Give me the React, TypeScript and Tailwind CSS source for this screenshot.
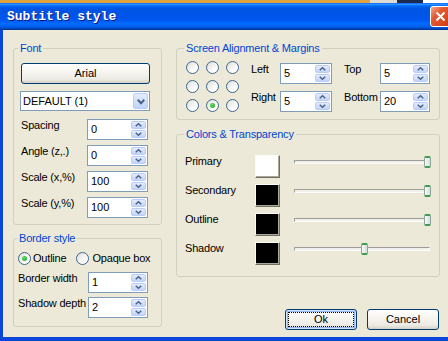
import React from "react";

const LABEL = "text-[11px] leading-[13px] tracking-[-0.2px] text-black whitespace-nowrap";
const LEGEND = "px-[2px] text-[11px] leading-[13px] tracking-[-0.2px] text-[#0046d5] whitespace-nowrap";
const GROUP = "rounded-[3px] border border-[#d0d0bf]";
const SPINBTN =
  "flex flex-1 items-center justify-center rounded-[2px] border border-[#b9cdf6] bg-[linear-gradient(to_bottom,#e3ecfd,#c2d4f9)]";
const XPBTN =
  "flex items-center justify-center rounded-[3px] border border-[#003c74] bg-[linear-gradient(to_bottom,#ffffff_0%,#f6f5f0_40%,#ecebe4_80%,#d6d0c5_100%)] text-[11px] text-black";

function Chevron({ down, w = 7, h = 4, sw = 1.5 }: { down?: boolean; w?: number; h?: number; sw?: number }) {
  const pts = down
    ? `0.75,0.75 ${w / 2},${h - 0.75} ${w - 0.75},0.75`
    : `0.75,${h - 0.75} ${w / 2},0.75 ${w - 0.75},${h - 0.75}`;
  return (
    <svg width={w} height={h} viewBox={`0 0 ${w} ${h}`} style={{ overflow: "visible" }}>
      <polyline points={pts} fill="none" stroke="#4d6185" strokeWidth={sw} />
    </svg>
  );
}

function SpinBox({ value, width }: { value: string; width: string }) {
  return (
    <div className={`flex h-[21px] shrink-0 border border-[#7f9db9] bg-white ${width}`}>
      <div className="flex flex-1 items-center pl-[3px] text-[11px] text-black">{value}</div>
      <div className="flex w-[17px] flex-col gap-[1px] p-[1px]">
        <div className={SPINBTN}>
          <Chevron />
        </div>
        <div className={SPINBTN}>
          <Chevron down />
        </div>
      </div>
    </div>
  );
}

function Radio({ checked }: { checked?: boolean }) {
  return (
    <span className="flex h-[13px] w-[13px] shrink-0 items-center justify-center rounded-full border border-[#3d6690] bg-[linear-gradient(135deg,#dcdcd7,#ffffff_70%)]">
      {checked && (
        <span className="h-[5px] w-[5px] rounded-full bg-[radial-gradient(circle_at_35%_35%,#63dd63,#21a121)]" />
      )}
    </span>
  );
}

function Swatch({ fill }: { fill: string }) {
  return (
    <div className="flex h-[23px] w-[25px] shrink-0 border border-b-[#716f64] border-l-[#fbfbf8] border-r-[#716f64] border-t-[#fbfbf8] bg-[#ece9d8]">
      <div className={`flex-1 border-b border-r border-[#aca899] ${fill}`} />
    </div>
  );
}

function Slider({ pos }: { pos: number }) {
  return (
    <div className="relative ml-[14px] flex h-[13px] w-[137px] items-center">
      <div className="h-[4px] w-[136px] rounded-[1px] border border-b-white border-l-[#9d9c99] border-r-white border-t-[#9d9c99] bg-[#f1f0ea]" />
      <div
        className="absolute top-[1px] h-[12px] w-[7px] rounded-[2px] border-x border-y-2 border-x-[#8ea399] border-y-[#3c9d50] bg-[linear-gradient(to_right,#f6f9f7,#d3e1da)]"
        style={{ left: pos }}
      />
    </div>
  );
}

function CloseButton() {
  return (
    <div className="flex h-[21px] w-[21px] shrink-0 items-center justify-center rounded-[3px] border border-white bg-[linear-gradient(135deg,#f2a68d_0%,#e25b33_35%,#d84a22_70%,#c23a14_100%)]">
      <svg width="11" height="11" viewBox="0 0 11 11">
        <path d="M1.5 1.5 L9.5 9.5 M9.5 1.5 L1.5 9.5" stroke="white" strokeWidth="2" />
      </svg>
    </div>
  );
}

export default function App() {
  const fontRows = [
    { label: "Spacing", value: "0" },
    { label: "Angle (z,.)", value: "0" },
    { label: "Scale (x,%)", value: "100" },
    { label: "Scale (y,%)", value: "100" },
  ];
  const colors = [
    { name: "Primary", fill: "bg-white", pos: 130 },
    { name: "Secondary", fill: "bg-black", pos: 130 },
    { name: "Outline", fill: "bg-black", pos: 130 },
    { name: "Shadow", fill: "bg-black", pos: 67 },
  ];

  return (
    <div className="relative flex h-[341px] w-[448px] flex-col overflow-hidden bg-[#ece9d8] font-['Liberation_Sans',Arial,sans-serif]">
      {/* desktop strip behind the window */}
      <div className="flex h-[3px] shrink-0">
        <div className="w-[370px] bg-[#e2a33f]" />
        <div className="w-[27px] bg-[#dcdad2]" />
        <div className="w-[26px] bg-[#1b2a4e]" />
        <div className="flex-1 bg-white" />
      </div>

      <div className="flex w-[460px] flex-1 flex-col">
        {/* title bar */}
        <div className="flex h-[27px] shrink-0 items-center justify-between bg-[linear-gradient(to_bottom,#0058ee_0%,#3593ff_4%,#288eff_6%,#127dff_8%,#036ffc_10%,#0262ee_14%,#0057e5_20%,#0054e3_24%,#0055eb_56%,#005bf5_66%,#026afe_76%,#0062ef_86%,#0052d6_92%,#0040ab_96%,#003092_100%)] pl-[7px] pr-[9px]">
          <span className="font-['Liberation_Mono',monospace] text-[13px] font-bold text-white [text-shadow:1px_1px_0_#0a1883]">
            Subtitle style
          </span>
          <CloseButton />
        </div>

        {/* body */}
        <div className="flex flex-1 border-b-[4px] border-l-[3px] border-r-[3px] border-[#0b46d9] bg-[#ece9d8] pl-[10px] pt-[12px]">
          {/* left column */}
          <div className="flex w-[149px] flex-col">
            <fieldset className={`${GROUP} pb-[6px] pl-[7px] pt-[8px]`}>
              <legend className={`-ml-[3px] ${LEGEND}`}>Font</legend>
              <div className="flex flex-col">
                <div className={`${XPBTN} h-[21px] w-[129px]`}>Arial</div>
                <div className="-ml-[1px] mt-[7px] flex h-[20px] w-[130px] border border-[#7f9db9] bg-white">
                  <div className="flex flex-1 items-center pl-[2px] text-[11px] text-black">DEFAULT (1)</div>
                  <div className="m-[1px] flex w-[15px] items-center justify-center rounded-[2px] border border-[#b9cdf6] bg-[linear-gradient(to_bottom,#e3ecfd,#c2d4f9)]">
                    <Chevron down w={8} h={5} sw={2} />
                  </div>
                </div>
                <div className="mt-[8px] flex flex-col gap-[5px]">
                  {fontRows.map((r) => (
                    <div key={r.label} className="flex items-start">
                      <span className={`w-[66px] ${LABEL}`}>{r.label}</span>
                      <SpinBox value={r.value} width="w-[61px]" />
                    </div>
                  ))}
                </div>
              </div>
            </fieldset>

            <fieldset className={`${GROUP} mt-[7px] pb-[8px] pl-[4px] pt-[7px]`}>
              <legend className={`-ml-[1px] ${LEGEND}`}>Border style</legend>
              <div className="flex h-[13px] items-center">
                <Radio checked />
                <span className={`ml-[2px] ${LABEL}`}>Outline</span>
                <span className="ml-[10px]">
                  <Radio />
                </span>
                <span className={`ml-[3px] ${LABEL}`}>Opaque box</span>
              </div>
              <div className="mt-[7px] flex flex-col gap-[4px]">
                <div className="flex items-start">
                  <span className={`w-[70px] ${LABEL}`}>Border width</span>
                  <SpinBox value="1" width="w-[60px]" />
                </div>
                <div className="flex items-start">
                  <span className={`w-[70px] ${LABEL}`}>Shadow depth</span>
                  <SpinBox value="2" width="w-[60px]" />
                </div>
              </div>
            </fieldset>
          </div>

          {/* right column */}
          <div className="ml-[14px] flex w-[264px] flex-col">
            <fieldset className={`${GROUP} pb-[7px] pl-[9px] pt-[6px]`}>
              <legend className={`-ml-[2px] ${LEGEND}`}>Screen Alignment &amp; Margins</legend>
              <div className="flex items-start">
                <div className="grid grid-cols-3 gap-x-[7px] gap-y-[6px]">
                  {Array.from({ length: 9 }).map((_, i) => (
                    <Radio key={i} checked={i === 7} />
                  ))}
                </div>
                <div className="ml-[12px] mt-[2px] grid grid-cols-[29px_52px_48px_50px] gap-y-[7px]">
                  <span className={LABEL}>Left</span>
                  <SpinBox value="5" width="w-[52px]" />
                  <span className={`pl-[12px] ${LABEL}`}>Top</span>
                  <SpinBox value="5" width="w-[50px]" />
                  <span className={LABEL}>Right</span>
                  <SpinBox value="5" width="w-[52px]" />
                  <span className={`pl-[12px] ${LABEL}`}>Bottom</span>
                  <SpinBox value="20" width="w-[50px]" />
                </div>
              </div>
            </fieldset>

            <fieldset className={`${GROUP} mt-[8px] pb-[11px] pl-[8px] pt-[14px]`}>
              <legend className={`-ml-[1px] ${LEGEND}`}>Colors &amp; Transparency</legend>
              <div className="flex flex-col gap-[6px]">
                {colors.map((c) => (
                  <div key={c.name} className="flex items-start">
                    <span className={`w-[70px] ${LABEL}`}>{c.name}</span>
                    <Swatch fill={c.fill} />
                    <Slider pos={c.pos} />
                  </div>
                ))}
              </div>
            </fieldset>

            <div className="mt-[32px] flex justify-end gap-[10px] pr-[1px]">
              <div
                className={`${XPBTN} h-[21px] w-[72px] shadow-[inset_0_0_0_1px_#cee7ff,inset_0_0_0_2px_#98b4f1] outline-1 outline-offset-[-4px] outline-dotted outline-black`}
              >
                Ok
              </div>
              <div className={`${XPBTN} h-[21px] w-[72px]`}>Cancel</div>
            </div>
          </div>
        </div>
      </div>
    </div>
  );
}
